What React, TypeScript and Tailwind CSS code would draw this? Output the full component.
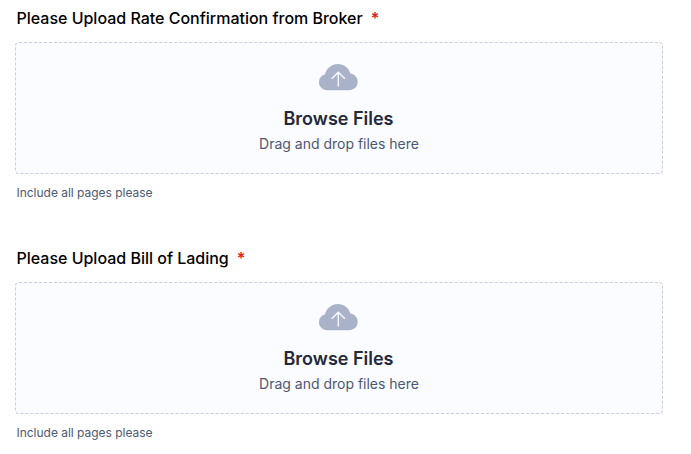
import React from 'react';

interface UploadFieldProps {
  label: string;
  hint: string;
}

const CloudUploadIcon: React.FC = () => (
  <svg className="block" width="40" height="28" viewBox="0 0 40 28" fill="none">
    <path
      d="M8.6 27.3C3.7 27.3 0 23.8 0 19.3c0-3.9 2.500-7.100 6.200-8.100C7.300 5.300 12.700 1 19 1c5.800 0 10.700 3.900 12.300 9.400 4.300.6 7.400 4.100 7.400 8.400 0 4.900-3.700 8.500-8.500 8.500z"
      fill="#a9b2c8"
    />
    <path d="M19.3 23.5V9.2M12.700 15.800L19.300 9.200l6.600 6.600" stroke="#fbfcff" strokeWidth="1.3" />
  </svg>
);

const UploadField: React.FC<UploadFieldProps> = ({ label, hint }) => (
  <div className="h-[240px] pt-2">
    <label className="flex h-5 items-center gap-2 pl-[1.5px] text-base font-medium text-black">
      <span className="tracking-[-0.01px]">{label}</span>
      <span className="font-semibold text-[#e02020]">*</span>
    </label>
    <div className="mt-3.5 flex h-[132px] flex-col items-center rounded border border-dashed border-[#c8cedd] bg-[#fbfcff] pt-5">
      <CloudUploadIcon />
      <p className="mt-4 mr-px text-lg leading-6 font-semibold text-[#23283a]">Browse Files</p>
      <p className="mt-[3px] text-sm leading-5 tracking-[-0.01px] text-[#4c5874]">Drag and drop files here</p>
    </div>
    <p className="mt-[11px] pl-[1.5px] text-xs leading-4 tracking-[-0.02px] text-[#4c5874]">{hint}</p>
  </div>
);

export default function App() {
  return (
    <div className="h-[454px] overflow-hidden bg-white pr-7 pl-[15px] font-['Inter',sans-serif]">
      <UploadField label="Please Upload Rate Confirmation from Broker" hint="Include all pages please" />
      <UploadField label="Please Upload Bill of Lading" hint="Include all pages please" />
    </div>
  );
}
